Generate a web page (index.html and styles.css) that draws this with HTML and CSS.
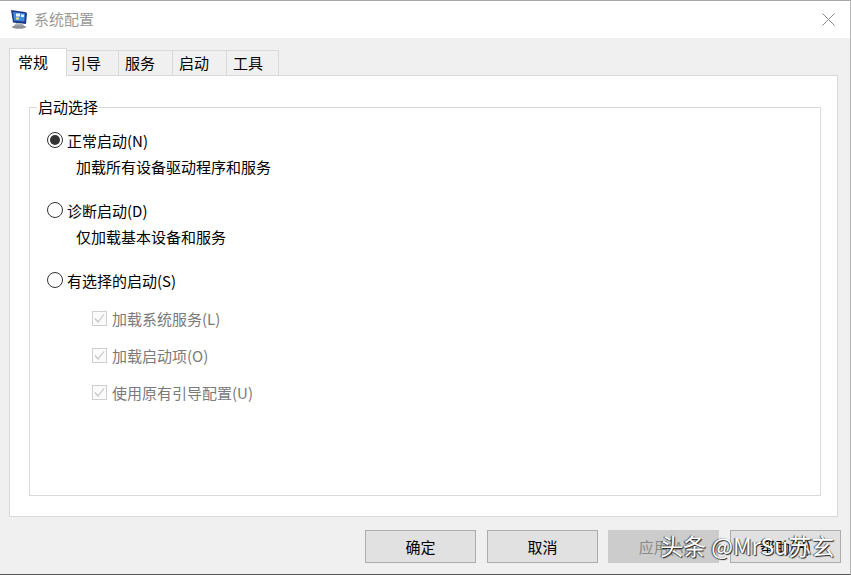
FILE: index.html
```html
<!DOCTYPE html>
<html lang="zh-CN">
<head>
<meta charset="utf-8">
<title>系统配置</title>
<link rel="stylesheet" href="styles.css">
</head>
<body>
<div class="window">
  <header class="titlebar">
    <svg class="app-icon" width="19" height="20" viewBox="0 0 19 20">
      <path d="M1 1 L15 3 L17 4 L16 15 L3 13.5 Z" fill="#1d3a86"/>
      <path d="M3 3 L15 4.6 L14.4 12.6 L4 11.4 Z" fill="#3d8ee2"/>
      <path d="M6 4.6 h4 v3 h-4 Z M11 5.6 h3 v2.4 h-3 Z" fill="#eaf3fb"/>
      <path d="M6 8.4 h3 v2.2 h-3 Z" fill="#f4d87a"/>
      <path d="M6 14 L13 15 L14 17 L4 17 Z" fill="#aeb1b8"/>
      <ellipse cx="9" cy="18" rx="7" ry="1.7" fill="#8d9097"/>
    </svg>
    <span class="title-text">系统配置</span>
    <svg class="close-icon" width="13" height="13" viewBox="0 0 13 13">
      <path d="M0.5 0.5 L12.5 12.5 M12.5 0.5 L0.5 12.5" stroke="#8a8a8a" stroke-width="1" fill="none"/>
    </svg>
  </header>
  <main class="client">
    <nav class="tabs">
      <span class="tab tab-active">常规</span>
      <span class="tab tab-first">引导</span>
      <span class="tab tab-mid">服务</span>
      <span class="tab tab-mid">启动</span>
      <span class="tab tab-last">工具</span>
    </nav>
    <section class="panel">
      <fieldset class="group">
        <legend class="legend">启动选择</legend>
        <div class="row row-first"><span class="radio radio-on"></span><span>正常启动(N)</span></div>
        <div class="desc">加载所有设备驱动程序和服务</div>
        <div class="row row-next"><span class="radio"></span><span>诊断启动(D)</span></div>
        <div class="desc">仅加载基本设备和服务</div>
        <div class="row row-next"><span class="radio"></span><span>有选择的启动(S)</span></div>
        <div class="check-row check-first"><span class="check"><svg width="13" height="13" viewBox="0 0 13 13"><path d="M2 6.5 L5 10 L11 2.5" stroke="#c4c4c4" stroke-width="1.2" fill="none"/></svg></span><span>加载系统服务(L)</span></div>
        <div class="check-row"><span class="check"><svg width="13" height="13" viewBox="0 0 13 13"><path d="M2 6.5 L5 10 L11 2.5" stroke="#c4c4c4" stroke-width="1.2" fill="none"/></svg></span><span>加载启动项(O)</span></div>
        <div class="check-row"><span class="check"><svg width="13" height="13" viewBox="0 0 13 13"><path d="M2 6.5 L5 10 L11 2.5" stroke="#c4c4c4" stroke-width="1.2" fill="none"/></svg></span><span>使用原有引导配置(U)</span></div>
      </fieldset>
    </section>
    <footer class="buttons">
      <span class="btn">确定</span>
      <span class="btn">取消</span>
      <span class="btn btn-disabled">应用(A)</span>
      <span class="btn btn-help">帮助(H)</span>
    </footer>
  </main>
  <div class="watermark">头条 @MrSu苏玄</div>
</div>
</body>
</html>
```
FILE: styles.css
```css
* { box-sizing: border-box; }
html, body { margin: 0; padding: 0; }
body {
  width: 851px;
  height: 575px;
  overflow: hidden;
  font-family: "Noto Sans CJK SC", "Liberation Sans", sans-serif;
  font-size: 15px;
  color: #000;
}
.window {
  position: relative;
  width: 851px;
  height: 575px;
  display: flex;
  flex-direction: column;
  background: #f0f0f0;
  border-top: 1px solid #a8a8a8;
  border-bottom: 1px solid #555;
  border-right: 1px solid #b5b5b5;
}
.titlebar {
  height: 37px;
  background: #fff;
  display: flex;
  align-items: center;
  padding: 0 14px 0 10px;
}
.app-icon { margin-right: 5px; margin-top: -2px; }
.title-text { color: #9a9a9a; line-height: 20px; margin-top: -1px; }
.close-icon { margin-left: auto; margin-right: 1px; }
.client {
  flex: 1;
  display: flex;
  flex-direction: column;
  padding: 10px 0 0 9px;
}
.tabs { display: flex; align-items: flex-end; height: 28px; position: relative; z-index: 1; }
.tab {
  height: 25px;
  margin-bottom: 1px;
  margin-left: -1px;
  background: #f0f0f0;
  border: 1px solid #d9d9d9;
  border-bottom: 0;
  display: flex;
  align-items: center;
  padding-left: 5px;
  line-height: 22px;
}
.tab-active {
  width: 58px;
  height: 28px;
  margin: 0;
  background: #fff;
  padding: 0 0 2px 8px;
}
.tab-first { width: 53px; padding-left: 4px; }
.tab-mid { width: 55px; padding-left: 6px; }
.tab-last { width: 53px; padding-left: 6px; }
.panel {
  width: 829px;
  height: 442px;
  margin-top: -1px;
  background: #fff;
  border: 1px solid #d9d9d9;
  padding: 21px 16px 21px 19px;
}
.group {
  margin: 0;
  height: 399px;
  border: 1px solid #d9d9d9;
  padding: 0 0 0 17px;
  min-width: 0;
  width: 792px;
}
.legend {
  padding: 0 1px;
  margin-left: -10px;
  line-height: 20px;
  height: 20px;
  margin-bottom: -2px;
}
.row { display: flex; align-items: center; height: 22px; gap: 4px; }
.row-first { margin-top: 14px; }
.row-next { margin-top: 21px; }
.radio {
  width: 16px;
  height: 16px;
  border: 1.2px solid #333;
  border-radius: 50%;
  background: #fff;
  flex: none;
  display: flex;
  align-items: center;
  justify-content: center;
}
.radio-on::before {
  content: "";
  width: 10px;
  height: 10px;
  border-radius: 50%;
  background: #333;
}
.desc { margin: 5px 0 0 29px; height: 22px; line-height: 22px; }
.check-row {
  display: flex;
  align-items: center;
  gap: 5px;
  height: 22px;
  margin: 15px 0 0 45px;
  color: #7a7a7a;
}
.check-first { margin-top: 16px; }
.check {
  width: 15px;
  height: 15px;
  border: 1px solid #cfcfcf;
  background: #fbfbfb;
  flex: none;
  display: flex;
  align-items: center;
  justify-content: center;
}
.buttons {
  display: flex;
  gap: 11px;
  padding-left: 356px;
  margin-top: 13px;
}
.btn {
  width: 111px;
  height: 33px;
  background: #e1e1e1;
  border: 1px solid #adadad;
  display: flex;
  align-items: center;
  justify-content: center;
  line-height: 20px;
}
.btn-disabled { background: #cccccc; border-color: #cccccc; color: #8a8a8a; margin-left: -1px; }
.watermark {
  position: absolute;
  left: 660px;
  top: 528px;
  font-size: 23px;
  line-height: 32px;
  color: #fff;
  white-space: nowrap;
  text-shadow: 1px 1px 1px #222, -1px 0 1px #444;
}
```
